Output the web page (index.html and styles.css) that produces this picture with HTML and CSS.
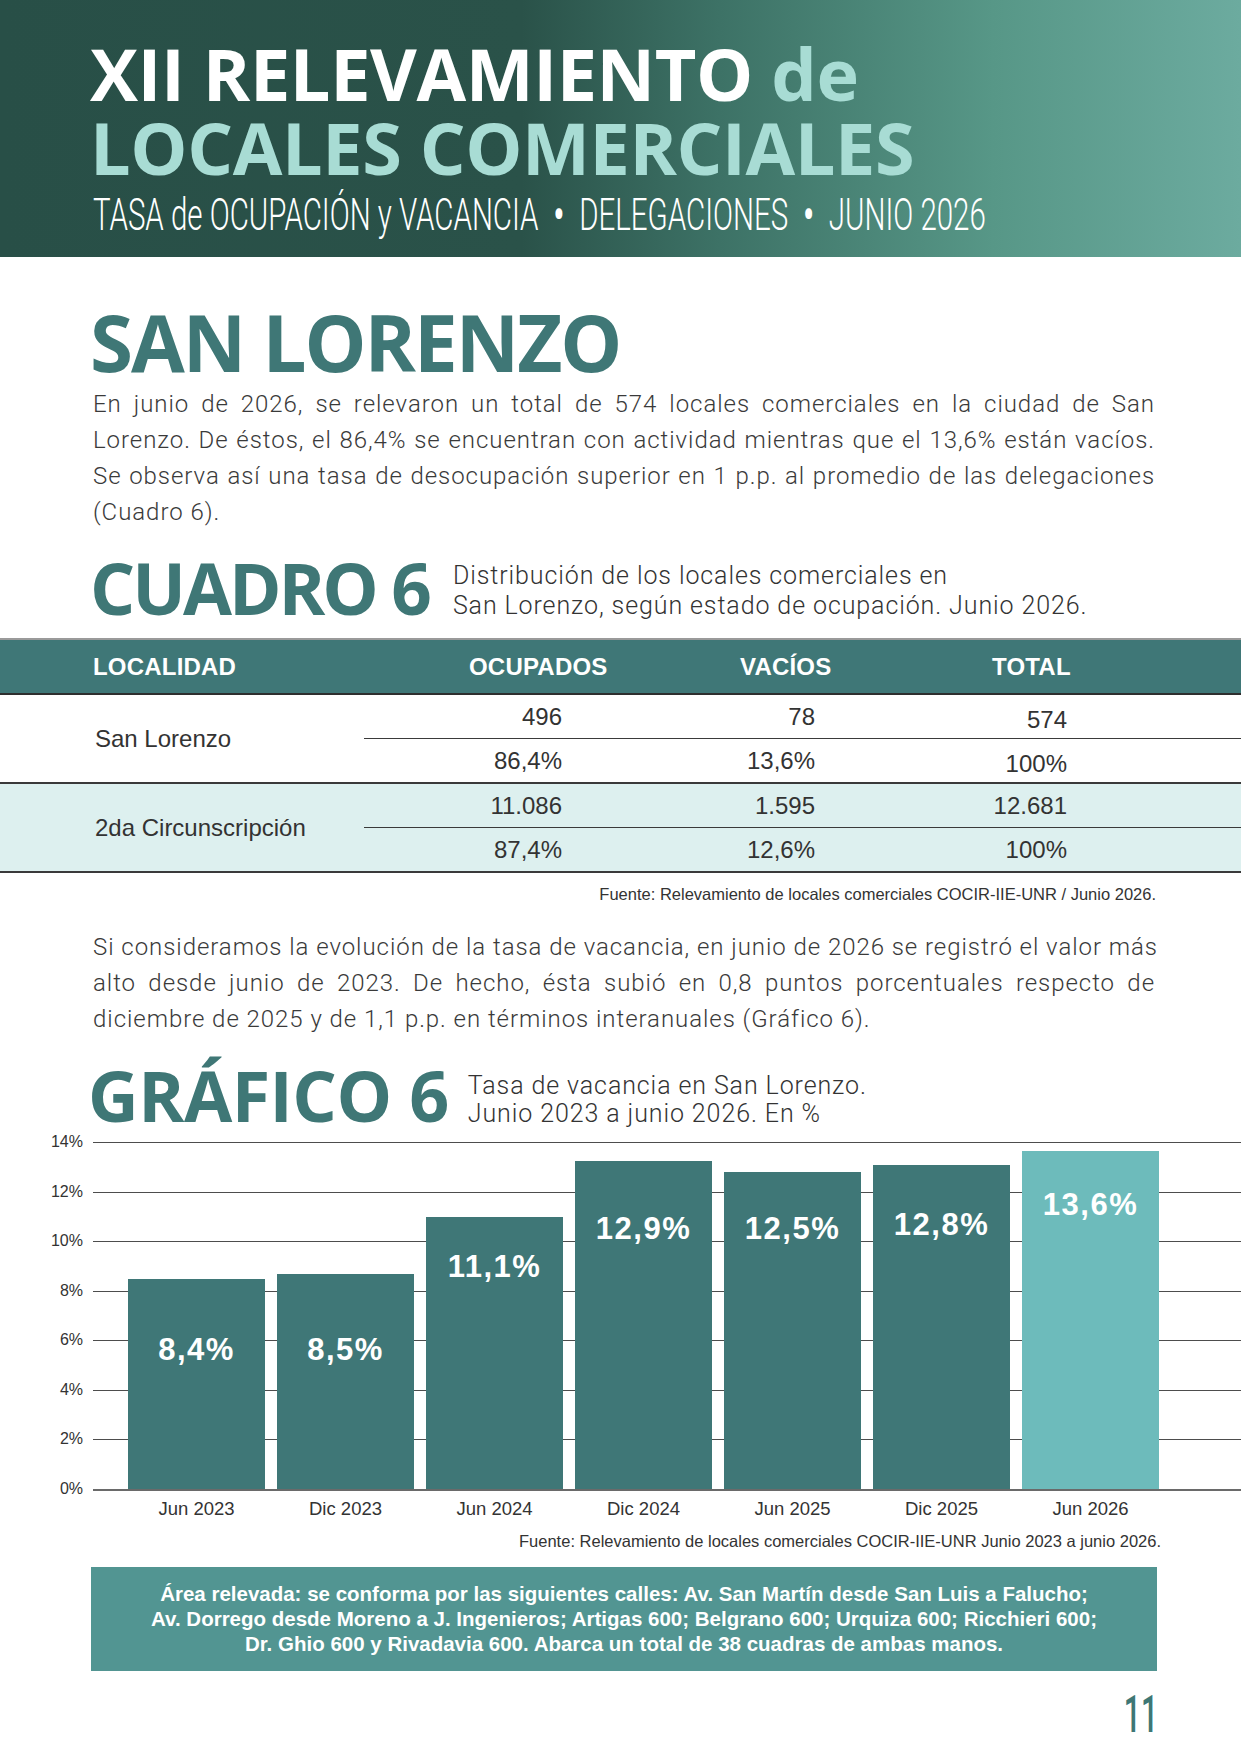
FILE: index.html
```html
<!DOCTYPE html>
<html lang="es">
<head>
<meta charset="utf-8">
<title>XII Relevamiento de Locales Comerciales - San Lorenzo</title>
<link rel="stylesheet" href="styles.css">
</head>
<body>
<header class="hero">
  <h1 class="hero-title"><span class="line1">XII RELEVAMIENTO <span class="l">de</span></span><span class="line2 l">LOCALES COMERCIALES</span></h1>
  <p class="hero-sub">TASA de OCUPACIÓN y VACANCIA <span class="dot">•</span> DELEGACIONES <span class="dot">•</span> JUNIO 2026</p>
</header>

<section class="wrap">
  <h2 class="city">SAN LORENZO</h2>
  <p class="lead">
    <span class="ln">En junio de 2026, se relevaron un total de 574 locales comerciales en la ciudad de San</span>
    <span class="ln">Lorenzo. De éstos, el 86,4% se encuentran con actividad mientras que el 13,6% están vacíos.</span>
    <span class="ln">Se observa así una tasa de desocupación superior en 1 p.p. al promedio de las delegaciones</span>
    <span class="ln last">(Cuadro 6).</span>
  </p>
  <div class="block-head">
    <h3 class="block-title">CUADRO 6</h3>
    <p class="block-desc">Distribución de los locales comerciales en<br>San Lorenzo, según estado de ocupación. Junio 2026.</p>
  </div>
</section>

<div class="tbl">
  <div class="tbl-head">
    <span class="h first">LOCALIDAD</span>
    <span class="h">OCUPADOS</span>
    <span class="h">VACÍOS</span>
    <span class="h">TOTAL</span>
  </div>
  <div class="tbl-row">
    <span class="name">San Lorenzo</span>
    <span class="num top">496</span>
    <span class="num top">78</span>
    <span class="num top low">574</span>
    <span class="num top"></span>
    <span class="num">86,4%</span>
    <span class="num">13,6%</span>
    <span class="num low">100%</span>
    <span class="num"></span>
  </div>
  <div class="tbl-row alt">
    <span class="name">2da Circunscripción</span>
    <span class="num top">11.086</span>
    <span class="num top">1.595</span>
    <span class="num top">12.681</span>
    <span class="num top"></span>
    <span class="num">87,4%</span>
    <span class="num">12,6%</span>
    <span class="num">100%</span>
    <span class="num"></span>
  </div>
</div>
<p class="src tbl-src">Fuente: Relevamiento de locales comerciales COCIR-IIE-UNR / Junio 2026.</p>

<section class="wrap">
  <p class="lead lead2">
    <span class="ln">Si consideramos la evolución de la tasa de vacancia, en junio de 2026 se registró el valor más</span>
    <span class="ln">alto desde junio de 2023. De hecho, ésta subió en 0,8 puntos porcentuales respecto de</span>
    <span class="ln last">diciembre de 2025 y de 1,1 p.p. en términos interanuales (Gráfico 6).</span>
  </p>
  <div class="block-head graf">
    <h3 class="block-title">GRÁFICO 6</h3>
    <p class="block-desc">Tasa de vacancia en San Lorenzo.<br>Junio 2023 a junio 2026. En %</p>
  </div>
</section>

<div class="chart">
  <div class="yaxis">
    <span>14%</span><span>12%</span><span>10%</span><span>8%</span><span>6%</span><span>4%</span><span>2%</span><span class="z">0%</span>
  </div>
  <div class="plot">
    <div class="bar" style="height:210px;padding-top:53px">8,4%</div>
    <div class="bar" style="height:215px;padding-top:58px">8,5%</div>
    <div class="bar" style="height:272px;padding-top:32px">11,1%</div>
    <div class="bar" style="height:328px;padding-top:50px">12,9%</div>
    <div class="bar" style="height:317px;padding-top:39px">12,5%</div>
    <div class="bar" style="height:324px;padding-top:42px">12,8%</div>
    <div class="bar hi" style="height:338px;padding-top:36px">13,6%</div>
  </div>
</div>
<div class="xaxis">
  <span>Jun 2023</span><span>Dic 2023</span><span>Jun 2024</span><span>Dic 2024</span><span>Jun 2025</span><span>Dic 2025</span><span>Jun 2026</span>
</div>
<p class="src chart-src">Fuente: Relevamiento de locales comerciales COCIR-IIE-UNR Junio 2023 a junio 2026.</p>

<div class="note">Área relevada: se conforma por las siguientes calles: Av. San Martín desde San Luis a Falucho;<br>Av. Dorrego desde Moreno a J. Ingenieros; Artigas 600; Belgrano 600; Urquiza 600; Ricchieri 600;<br>Dr. Ghio 600 y Rivadavia 600. Abarca un total de 38 cuadras de ambas manos.</div>

<div class="pagenum"><span>11</span></div>
</body>
</html>
```

FILE: styles.css
```css
html, body {
  margin: 0;
  padding: 0;
  background: #ffffff;
}
body {
  width: 1241px;
  font-family: Roboto, "Liberation Sans", sans-serif;
  color: #3a3a3a;
  overflow: hidden;
}

/* ---------- header ---------- */
.hero {
  height: 257px;
  box-sizing: border-box;
  padding: 36px 0 0 90px;
  background: linear-gradient(90deg, #284f47 0%, #2a5249 42%, #3d7266 58%, #579787 80%, #6cab9f 100%);
  overflow: hidden;
}
.hero-title {
  margin: 0;
  font: 700 72px/74px "Open Sans", "Liberation Sans", sans-serif;
  letter-spacing: -0.4px;
  color: #ffffff;
  white-space: nowrap;
}
.hero-title .line1,
.hero-title .line2 {
  display: block;
  height: 74px;
}
.hero-title .l { color: #a8dcd4; }
.hero-sub {
  margin: 6px 0 0 3px;
  height: 50px;
  font: 300 45px/50px Roboto, "Liberation Sans", sans-serif;
  color: #ffffff;
  white-space: nowrap;
  transform: scaleX(0.655);
  transform-origin: left center;
}
.hero-sub .dot {
  font-weight: 700;
  padding: 0 12px;
}

/* ---------- text blocks ---------- */
.wrap {
  padding: 0 86px 0 93px;
}
.city {
  margin: 45px 0 0 -3px;
  font: 700 78px/80px "Open Sans", "Liberation Sans", sans-serif;
  letter-spacing: -2px;
  color: #3f7776;
}
.lead {
  margin: 4px 0 0;
  font: 300 24px/36px Roboto, "Liberation Sans", sans-serif;
  letter-spacing: 0.95px;
  color: #3a3a3a;
}
.lead .ln {
  display: block;
  white-space: nowrap;
  text-align: justify;
  text-align-last: justify;
}
.lead .ln.last { text-align-last: left; }
.lead2 { margin-top: 25px; }

.block-head {
  display: flex;
  align-items: flex-start;
  margin-top: 22px;
}
.block-title {
  margin: 0 0 0 -3px;
  font: 700 71px/72px "Open Sans", "Liberation Sans", sans-serif;
  letter-spacing: -3px;
  color: #3f7776;
  white-space: nowrap;
}
.block-desc {
  margin: 9px 0 0 24px;
  font: 300 25px/30px Roboto, "Liberation Sans", sans-serif;
  letter-spacing: 0.9px;
  color: #333333;
}
.graf { margin-top: 22px; }
.graf .block-title { font-size: 70px; letter-spacing: -0.5px; margin-left: -5px; }
.graf .block-desc { margin: 13px 0 0 19px; line-height: 28px; }

/* ---------- table ---------- */
.tbl {
  margin-top: 14px;
  font-family: "Liberation Sans", Arial, sans-serif;
  font-size: 24px;
  color: #333333;
}
.tbl-head {
  display: grid;
  grid-template-columns: 469px 271px 252px 1fr;
  align-items: center;
  height: 57px;
  box-sizing: border-box;
  background: #3f7777;
  border-top: 2px solid #9a9a9a;
  border-bottom: 2px solid #2e2e2e;
  color: #ffffff;
  font-weight: 700;
  letter-spacing: 0.2px;
}
.tbl-head .first { padding-left: 93px; }
.tbl-row {
  display: grid;
  grid-template-columns: 364px 198px 253px 252px 1fr;
  grid-template-rows: 44px 43px;
  border-bottom: 2px solid #3a3a3a;
}
.tbl-row.alt { background: #ddf0ef; }
.tbl-row .name {
  grid-row: 1 / span 2;
  grid-column: 1;
  align-self: center;
  padding-left: 95px;
}
.tbl-row .num {
  display: flex;
  align-items: center;
  justify-content: flex-end;
}
.tbl-row .num.top { border-bottom: 1.5px solid #3a3a3a; }
.tbl-row .num.low { padding-top: 6px; }

.src {
  margin: 0;
  text-align: right;
  font: 16.5px/20px "Liberation Sans", Arial, sans-serif;
  color: #333333;
}
.tbl-src { margin-top: 11px; padding-right: 85px; }

/* ---------- chart ---------- */
.chart {
  display: flex;
  margin-top: 11px;
  font-family: "Liberation Sans", Arial, sans-serif;
}
.yaxis {
  width: 44px;
  margin: -9px 10px 0 39px;
  display: flex;
  flex-direction: column;
  align-items: flex-end;
  font-size: 16px;
  line-height: 18px;
  color: #333333;
}
.yaxis span { height: 49.57px; }
.yaxis span.z { height: 18px; }
.plot {
  flex: 1;
  height: 347px;
  display: flex;
  align-items: flex-end;
  gap: 12px;
  padding-left: 35px;
  background: repeating-linear-gradient(to bottom, #4d4d4d 0, #4d4d4d 1px, transparent 1px, transparent 49.57px);
  border-bottom: 2px solid #6a6a6a;
}
.bar {
  width: 137px;
  box-sizing: border-box;
  background: #3f7777;
  color: #ffffff;
  font: 700 31px/36px "Liberation Sans", Arial, sans-serif;
  letter-spacing: 1.5px;
  text-align: center;
}
.bar.hi { background: #6dbbbb; }
.xaxis {
  display: flex;
  gap: 12px;
  padding-left: 128px;
  margin-top: 0;
  font: 18.5px/22px "Liberation Sans", Arial, sans-serif;
  color: #333333;
}
.xaxis span { width: 137px; text-align: center; }
.chart-src { margin-top: 11px; padding-right: 80px; }

/* ---------- note & page number ---------- */
.note {
  margin: 16px 84px 0 91px;
  padding: 14px 0 15px;
  background: #529592;
  color: #ffffff;
  font: 700 20.5px/25px "Liberation Sans", Arial, sans-serif;
  text-align: center;
}
.pagenum {
  margin-top: 18px;
  padding-right: 83px;
  text-align: right;
  font: 500 52px/52px Roboto, "Liberation Sans", sans-serif;
  color: #3e7775;
}
.pagenum span {
  display: inline-block;
  transform: scaleX(0.58);
  transform-origin: right center;
}
```
